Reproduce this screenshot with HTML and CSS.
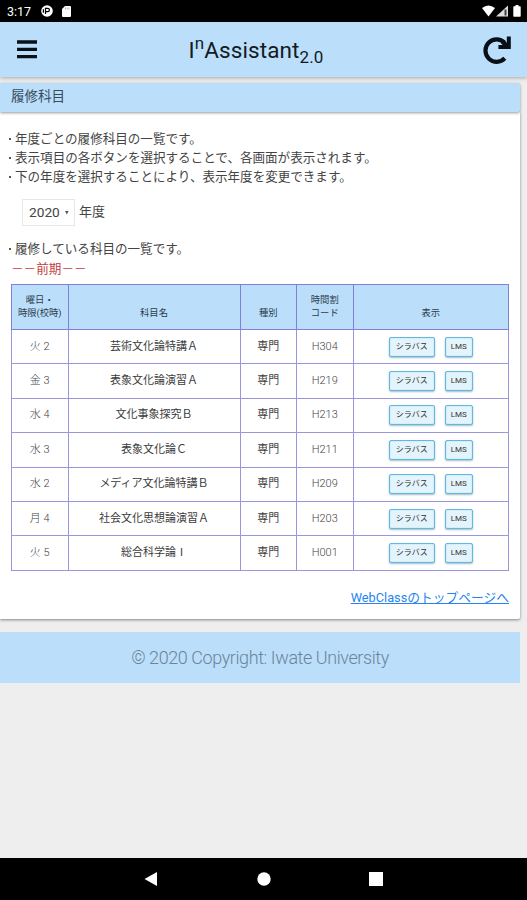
FILE: index.html
```html
<!DOCTYPE html>
<html lang="ja">
<head>
<meta charset="utf-8">
<title>InAssistant 2.0</title>
<link rel="stylesheet" href="styles.css">
</head>
<body>
<div class="status">
  <span class="clock">3:17</span>
  <svg class="app-icon" viewBox="0 0 12 12"><circle cx="6" cy="6" r="5.8" fill="#fff"/><path d="M4.5 9V3.3h2.2a1.7 1.7 0 0 1 0 3.4H4.5M2.4 4.2v3.6" fill="none" stroke="#000" stroke-width="1.2"/></svg>
  <svg class="sd-icon" viewBox="0 0 9 11"><path d="M3 0h5a1 1 0 0 1 1 1v9a1 1 0 0 1-1 1H1a1 1 0 0 1-1-1V3z" fill="#fff"/><path d="M3.5 1.5v2M5.2 1.5v2M6.9 1.5v2" stroke="#888" stroke-width=".6"/></svg>
  <svg class="signals" viewBox="0 0 39 12"><path d="M0 3Q6.5-2 13 3L6.5 11.5z" fill="#fff"/><path d="M14 11.5L26 .5v11z" fill="#ddd"/><path d="M22.5 4.5h2v6h-2z" fill="#444"/><path d="M33.5 0h3v1.2H38q.7 0 .7.8v9q0 .8-.7.8h-6q-.7 0-.7-.8V2q0-.8.7-.8h1.5z" fill="#fff"/></svg>
</div>
<header class="appbar">
  <svg class="menu" viewBox="0 0 20 19"><path d="M0 2h20M0 9.3h20M0 16.7h20" stroke="#0b1117" stroke-width="3.3"/></svg>
  <h1 class="brand">I<sup>n</sup>Assistant<sub>2.0</sub></h1>
  <svg class="reload" viewBox="0 0 28 28"><path d="M21.5 6.6A11.2 11.2 0 1 0 21.8 22.3" fill="none" stroke="#071018" stroke-width="4.2"/><path d="M23.8 .4H27.8V13H15.4V9H19.6L17.6 6.8L20.8 3.8L23.8 6.8z" fill="#071018"/></svg>
</header>
<main class="page">
  <h2 class="section-title">履修科目</h2>
  <section class="card">
    <ul class="notes">
      <li>年度ごとの履修科目の一覧です。</li>
      <li>表示項目の各ボタンを選択することで、各画面が表示されます。</li>
      <li>下の年度を選択することにより、表示年度を変更できます。</li>
    </ul>
    <div class="year"><span class="select">2020<i class="caret"></i></span><span class="unit">年度</span></div>
    <ul class="notes"><li>履修している科目の一覧です。</li></ul>
    <p class="term">－－前期－－</p>
    <table class="courses">
      <colgroup><col class="c-day"><col class="c-name"><col class="c-kind"><col class="c-code"><col class="c-show"></colgroup>
      <thead><tr><th>曜日・<br>時限(校時)</th><th>科目名</th><th>種別</th><th>時間割<br>コード</th><th>表示</th></tr></thead>
      <tbody>
        <tr><td>火 2</td><td class="name">芸術文化論特講Ａ</td><td class="kind">専門</td><td>H304</td><td><span class="btn wide">シラバス</span><span class="btn">LMS</span></td></tr>
        <tr><td>金 3</td><td class="name">表象文化論演習Ａ</td><td class="kind">専門</td><td>H219</td><td><span class="btn wide">シラバス</span><span class="btn">LMS</span></td></tr>
        <tr><td>水 4</td><td class="name">文化事象探究Ｂ</td><td class="kind">専門</td><td>H213</td><td><span class="btn wide">シラバス</span><span class="btn">LMS</span></td></tr>
        <tr><td>水 3</td><td class="name">表象文化論Ｃ</td><td class="kind">専門</td><td>H211</td><td><span class="btn wide">シラバス</span><span class="btn">LMS</span></td></tr>
        <tr><td>水 2</td><td class="name">メディア文化論特講Ｂ</td><td class="kind">専門</td><td>H209</td><td><span class="btn wide">シラバス</span><span class="btn">LMS</span></td></tr>
        <tr><td>月 4</td><td class="name">社会文化思想論演習Ａ</td><td class="kind">専門</td><td>H203</td><td><span class="btn wide">シラバス</span><span class="btn">LMS</span></td></tr>
        <tr><td>火 5</td><td class="name">総合科学論Ⅰ</td><td class="kind">専門</td><td>H001</td><td><span class="btn wide">シラバス</span><span class="btn">LMS</span></td></tr>
      </tbody>
    </table>
    <a class="top-link">WebClassのトップページへ</a>
  </section>
  <footer class="footer">© 2020 Copyright: Iwate University</footer>
</main>
<nav class="nav">
  <svg viewBox="0 0 14 14"><path d="M.5 7L13 0v14z" fill="#fff"/></svg>
  <svg viewBox="0 0 14 14"><circle cx="7" cy="7" r="6.7" fill="#fff"/></svg>
  <svg viewBox="0 0 14 14"><path d="M0 0h14v14H0z" fill="#fff"/></svg>
</nav>
</body>
</html>
```
FILE: styles.css
```css
* { box-sizing: border-box; }
body {
  margin: 0; height: 900px; overflow: hidden;
  display: flex; flex-direction: column;
  background: #eee; color: #444;
  font-family: Roboto, "Noto Sans CJK JP", sans-serif;
}
svg { display: block; flex: none; }
.status { height: 22px; flex: none; background: #000; color: #fff; display: flex; align-items: center; padding: 0 6px 0 7px; }
.clock { font-size: 12.5px; width: 34px; }
.app-icon { width: 12px; height: 12px; margin-right: 9px; }
.sd-icon { width: 9px; height: 11px; }
.signals { width: 39px; height: 12px; margin-left: auto; margin-right: 0; }
.appbar {
  height: 55px; flex: none; background: #bbdefb; display: flex; align-items: center;
  justify-content: space-between; padding: 0 16px 0 17px;
  box-shadow: 0 1px 4px rgba(0,0,0,.3);
}
.menu { width: 20px; height: 19px; }
.reload { width: 28px; height: 28px; }
.brand { margin: 0 8px 0 0; font-size: 22.5px; font-weight: 400; line-height: 28px; color: #121b24; letter-spacing: .1px; }
.brand sup, .brand sub { font-size: 17px; line-height: 0; position: relative; vertical-align: baseline; }
.brand sup { top: -9px; }
.brand sub { top: 5px; }
.page { flex: 1; width: 520px; padding-top: 6px; }
.section-title {
  margin: 0; height: 29px; padding: 0 11px; background: #bbdefb; border-radius: 0 2px 2px 0;
  font-size: 13.5px; font-weight: 400; line-height: 27px; color: #384b5c;
  position: relative; box-shadow: 0 1px 3px rgba(0,0,0,.4);
}
.card { height: 507px; background: #fff; padding: 17px 11px 0; border-radius: 0 0 2px 0; box-shadow: 0 1px 3px rgba(0,0,0,.45); }
.notes { list-style: none; margin: 0 0 0 -4px; padding: 0; font-size: 12.55px; line-height: 19px; }
.notes li { display: flex; align-items: center; white-space: nowrap; }
.notes li::before { content: ""; width: 2px; height: 2px; margin: 0 4px 0 2px; background: #555; }
.year { display: flex; align-items: center; gap: 4px; height: 27px; margin: 13px 0 13px 11px; font-size: 13px; }
.select { width: 53px; height: 27px; border: 1px solid #e4e7ea; padding-left: 6px; font-size: 13.7px; line-height: 25px; display: flex; align-items: center; gap: 5px; }
.unit { line-height: 19px; padding-bottom: 3px; }
.caret { width: 4px; height: 4px; background: #555; clip-path: polygon(0 0, 100% 0, 50% 100%); }
.term { margin: 1px 0 0 0; color: #c43c3c; font-size: 12.6px; line-height: 19px; height: 25px; }
.courses { width: 498px; table-layout: fixed; border-collapse: collapse; text-align: center; }
.c-day { width: 56.5px; }
.c-name { width: 172px; }
.c-kind { width: 56.5px; }
.c-code { width: 56.5px; }
.courses th, .courses td { border: 1px solid #9a96dc; padding: 0; }
.courses thead tr { height: 45px; }
.courses th { background: #bbdefb; font-size: 9.3px; font-weight: 400; line-height: 13px; vertical-align: bottom; padding-bottom: 10px; color: #2d3d4d; border-color: #827fd8; white-space: nowrap; }
.courses tbody tr { height: 34.4px; }
.courses td { font-size: 11px; font-weight: 300; line-height: 16px; color: #444; }
.courses td.name, .courses td.kind { font-weight: 400; color: #3c3c3c; }
.btn {
  display: inline-block; vertical-align: middle; width: 28px; height: 20px; border: 1px solid #62b9dc; border-radius: 2px;
  background: #e4f4fd; box-shadow: 0 1px 2px rgba(0,60,90,.35), inset 0 0 1px #62b9dc;
  font-size: 8px; font-weight: 400; line-height: 18px; color: #333;
}
.btn.wide { width: 46px; margin-right: 10px; }
.top-link { display: block; margin-top: 17px; text-align: right; font-size: 12.75px; line-height: 20px; color: #2684f0; text-decoration: underline; }
.footer { margin-top: 13px; height: 51px; background: #bbdefb; text-align: center; font-size: 18px; font-weight: 300; letter-spacing: -.42px; line-height: 51px; color: #6b8499; }
.nav { height: 42px; flex: none; background: #000; display: flex; justify-content: center; gap: 98.5px; align-items: center; }
.nav svg { width: 14px; height: 14px; }
```
